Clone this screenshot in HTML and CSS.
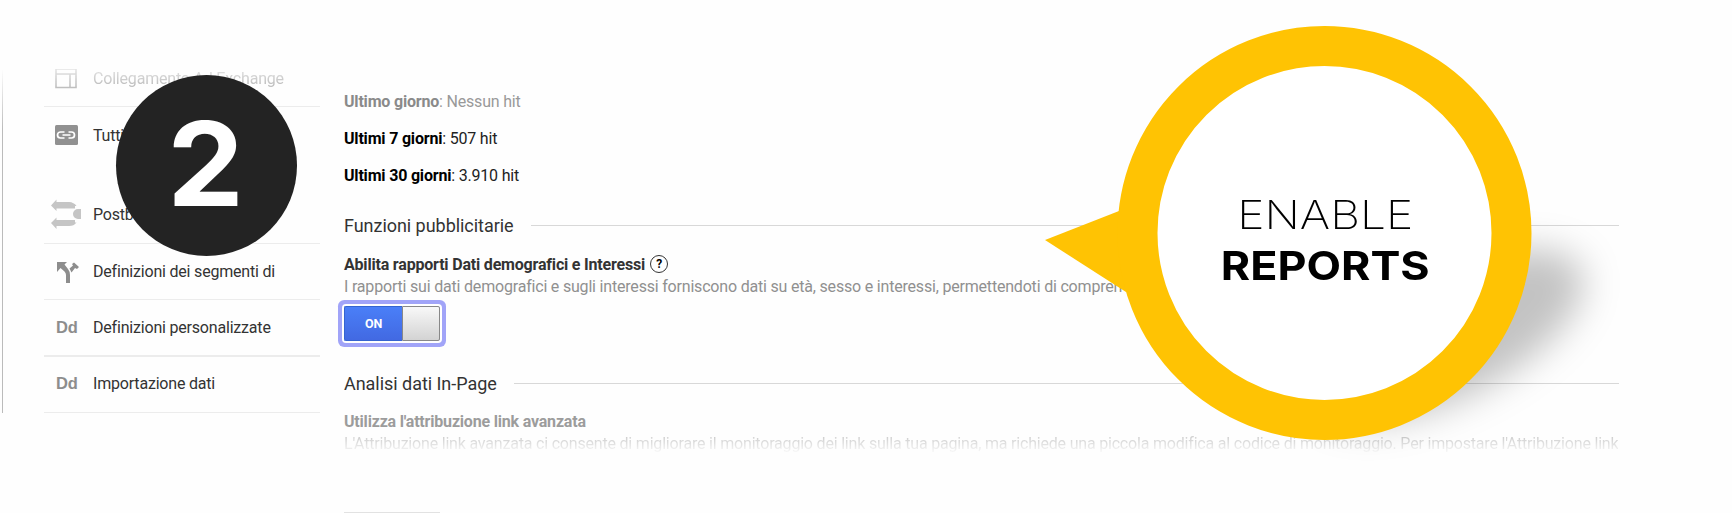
FILE: index.html
```
<!DOCTYPE html>
<html lang="it">
<head>
<meta charset="utf-8">
<title>Enable reports</title>
<link rel="stylesheet" href="styles.css">
</head>
<body>
<div class="page">
  <nav class="sidebar">
    <div class="item item-exchange">
      <svg class="icon" width="24" height="24" viewBox="0 0 24 24" fill="none" stroke="#aaa" stroke-width="1.600"><path d="M1 3h20v18.500H1zM1 8h20M15 8v13.500"/></svg>
      <span>Collegamento Ad Exchange</span>
    </div>
    <div class="item item-tutti">
      <svg class="icon" width="24" height="24" viewBox="0 0 24 24"><rect x="0" y="2" width="23" height="20" rx="1.500" fill="#919191"/><g fill="none" stroke="#fff" stroke-width="1.700"><path d="M9.500 9H5.500a3 3 0 0 0 0 6h4M13.500 9h3a3 3 0 0 1 0 6h-3M7.500 12h8"/></g></svg>
      <span>Tutti</span>
    </div>
    <div class="item item-postback">
      <svg class="icon-wide" width="30" height="30" viewBox="0 0 30 30" fill="#c5c5c5"><path d="M0 6.500 5.500 0.500v2.500H18q5 .3 7.500 4H24v2.500H5.500V12zM0 24 5.500 18.500v2.500H24v2.500h1.500Q23 27 18 27H5.500v3zM30 10v10h-3a5 5 0 0 1 0-10z"/></svg>
      <span>Postb</span>
    </div>
    <div class="item item-segmenti">
      <svg class="icon" width="24" height="24" viewBox="0 0 24 24" fill="#8d8d8d"><path d="M2 2h10L9.500 4.500l3.500 4.500Q15 11.500 15 15v8h-4v-8q0-2-1.500-3.500L5.500 8 2 12zM14.500 8.500l3.500-3-1-1.500 2-1.500 5 4.500-2 2-2-1-3.500 4.500z"/></svg>
      <span>Definizioni dei segmenti di</span>
    </div>
    <div class="item item-custom"><b class="dd">Dd</b><span>Definizioni personalizzate</span></div>
    <div class="item item-import"><b class="dd">Dd</b><span>Importazione dati</span></div>
  </nav>

  <main class="content">
    <p class="hit hit-muted"><b>Ultimo giorno</b>: Nessun hit</p>
    <p class="hit"><b>Ultimi 7 giorni</b>: 507 hit</p>
    <p class="hit"><b>Ultimi 30 giorni</b>: 3.910 hit</p>
    <h2 class="heading heading-ads">Funzioni pubblicitarie</h2>
    <h3 class="label">Abilita rapporti Dati demografici e Interessi<span class="help">?</span></h3>
    <p class="desc">I rapporti sui dati demografici e sugli interessi forniscono dati su età, sesso e interessi, permettendoti di compren</p>
    <div class="toggle"><span class="toggle-on">ON</span><span class="toggle-knob"></span></div>
    <h2 class="heading heading-page">Analisi dati In-Page</h2>
    <h3 class="label label-muted">Utilizza l'attribuzione link avanzata</h3>
    <p class="desc desc-fade">L'Attribuzione link avanzata ci consente di migliorare il monitoraggio dei link sulla tua pagina, ma richiede una piccola modifica al codice di monitoraggio. Per impostare l'Attribuzione link</p>
    <div class="next-toggle"></div>
  </main>

  <div class="step"><span>2</span></div>

  <div class="callout">
    <svg class="bubble" width="640" height="480" viewBox="1020 0 640 480">
      <defs><filter id="soft" x="-40%" y="-60%" width="180%" height="220%"><feGaussianBlur stdDeviation="18"/></filter></defs>
      <g filter="url(#soft)"><ellipse cx="1449" cy="336" rx="148" ry="62" transform="rotate(-27 1449 336)" fill="#000" fill-opacity=".23"/></g>
      <path d="M1045 240 1119 211 1160 205V300L1126 292z" fill="#ffc303"/>
      <circle cx="1324.500" cy="233" r="187" fill="#fff" stroke="#ffc303" stroke-width="40"/>
    </svg>
    <div class="callout-text"><span class="thin">ENABLE</span><span class="strong">REPORTS</span></div>
  </div>
</div>
</body>
</html>
```

FILE: styles.css
```
* { box-sizing: border-box; }
body { margin: 0; background: #fefefe; font-family: Roboto, "Liberation Sans", sans-serif; font-size: 16px; letter-spacing: -0.193px; color: #333; }
p, h2, h3 { margin: 0; font-weight: 400; white-space: nowrap; }
.page { position: relative; display: flex; width: 1732px; height: 513px; overflow: hidden; padding-left: 2px; }

.sidebar { width: 318px; height: 344px; margin-top: 69px; padding-left: 42px; background: linear-gradient(#fefefe, #bbb 60px) no-repeat left top / 1px 100%; }
.item { display: flex; align-items: center; border-bottom: 1px solid #ececec; white-space: nowrap; }
.icon { flex: none; margin: 0 14px 0 11px; }
.icon-wide { flex: none; margin: 0 12px 0 7px; }
.item-exchange { height: 38px; padding-bottom: 19px; color: #bbb; -webkit-mask-image: linear-gradient(rgba(0, 0, 0, .4), #000 18px); mask-image: linear-gradient(rgba(0, 0, 0, .4), #000 18px); }
.item-exchange .icon { opacity: .75; }
.item-tutti { height: 56px; border: 0; }
.item-postback { height: 81px; padding-top: 22px; }
.item-segmenti { height: 56px; }
.item-custom { height: 57px; border-bottom-width: 2px; }
.item-import { height: 56px; padding-bottom: 2px; }
.dd { width: 49px; padding-left: 12px; font: bold 16.5px "Liberation Sans", sans-serif; color: #8d8d8d; }

.content { width: 1275px; margin-left: 24px; padding-top: 83px; }
.hit { height: 37px; line-height: 37px; color: #222; }
.hit b { color: #000; }
.hit-muted { color: #999; }
.hit-muted b { color: #8a8a8a; }
.heading { display: flex; align-items: center; gap: 17px; height: 30px; font-size: 18px; letter-spacing: -0.04px; }
.heading::after { content: ""; flex: 1; height: 1px; background: #d8d8d8; }
.heading-ads { margin-top: 16px; }
.heading-page { margin-top: 27px; }
.label { display: flex; align-items: center; gap: 5px; height: 24px; margin-top: 12px; font-size: 16px; font-weight: 700; }
.label-muted { margin-top: 11px; color: #9c9c9c; }
.help { width: 18px; height: 18px; border: 1px solid #333; border-radius: 50%; font-size: 12px; line-height: 16px; text-align: center; color: #000; }
.desc { height: 22px; line-height: 22px; color: #909090; }
.desc-fade { width: max-content; color: transparent; background: linear-gradient(#d0d0d0 20%, #f8f8f8 90%); background-clip: text; -webkit-background-clip: text; }
.toggle { display: flex; width: 96px; height: 35px; margin-top: 8px; border-radius: 2px; box-shadow: 0 0 0 2px #fff, 0 0 0 6px #a1a4f8; }
.toggle-on { display: flex; align-items: center; justify-content: center; width: 58px; border: 1px solid #3564cf; border-right: 0; border-radius: 2px 0 0 2px; background: linear-gradient(#4a7ff8, #4269e2); color: #fff; font-size: 12.5px; font-weight: 700; }
.toggle-knob { flex: 1; border: 1px solid #888; border-radius: 0 2px 2px 0; background: linear-gradient(#f8f8f8, #d3d3d3); }
.next-toggle { width: 96px; height: 1px; margin-top: 57px; background: #e2e2e2; }

.step { position: absolute; left: 116px; top: 75px; display: flex; align-items: center; justify-content: center; width: 181px; height: 181px; padding: 0 1px 4px 0; border-radius: 50%; background: #232323; color: #fff; font-family: Inter, sans-serif; font-size: 116px; font-weight: 750; line-height: 1; letter-spacing: 0; }
.step span { transform: scaleX(1.05); }
.callout { position: absolute; left: 1020px; top: 0; width: 640px; height: 480px; }
.bubble { display: block; }
.callout-text { position: absolute; left: 118px; top: 189px; width: 374px; display: flex; flex-direction: column; align-items: center; color: #000; font-family: Inter, sans-serif; font-size: 40px; line-height: 51px; letter-spacing: 0; }
.thin { font-weight: 200; transform: scaleX(1.155); }
.strong { font-weight: 750; transform: scaleX(1.12); }
```
